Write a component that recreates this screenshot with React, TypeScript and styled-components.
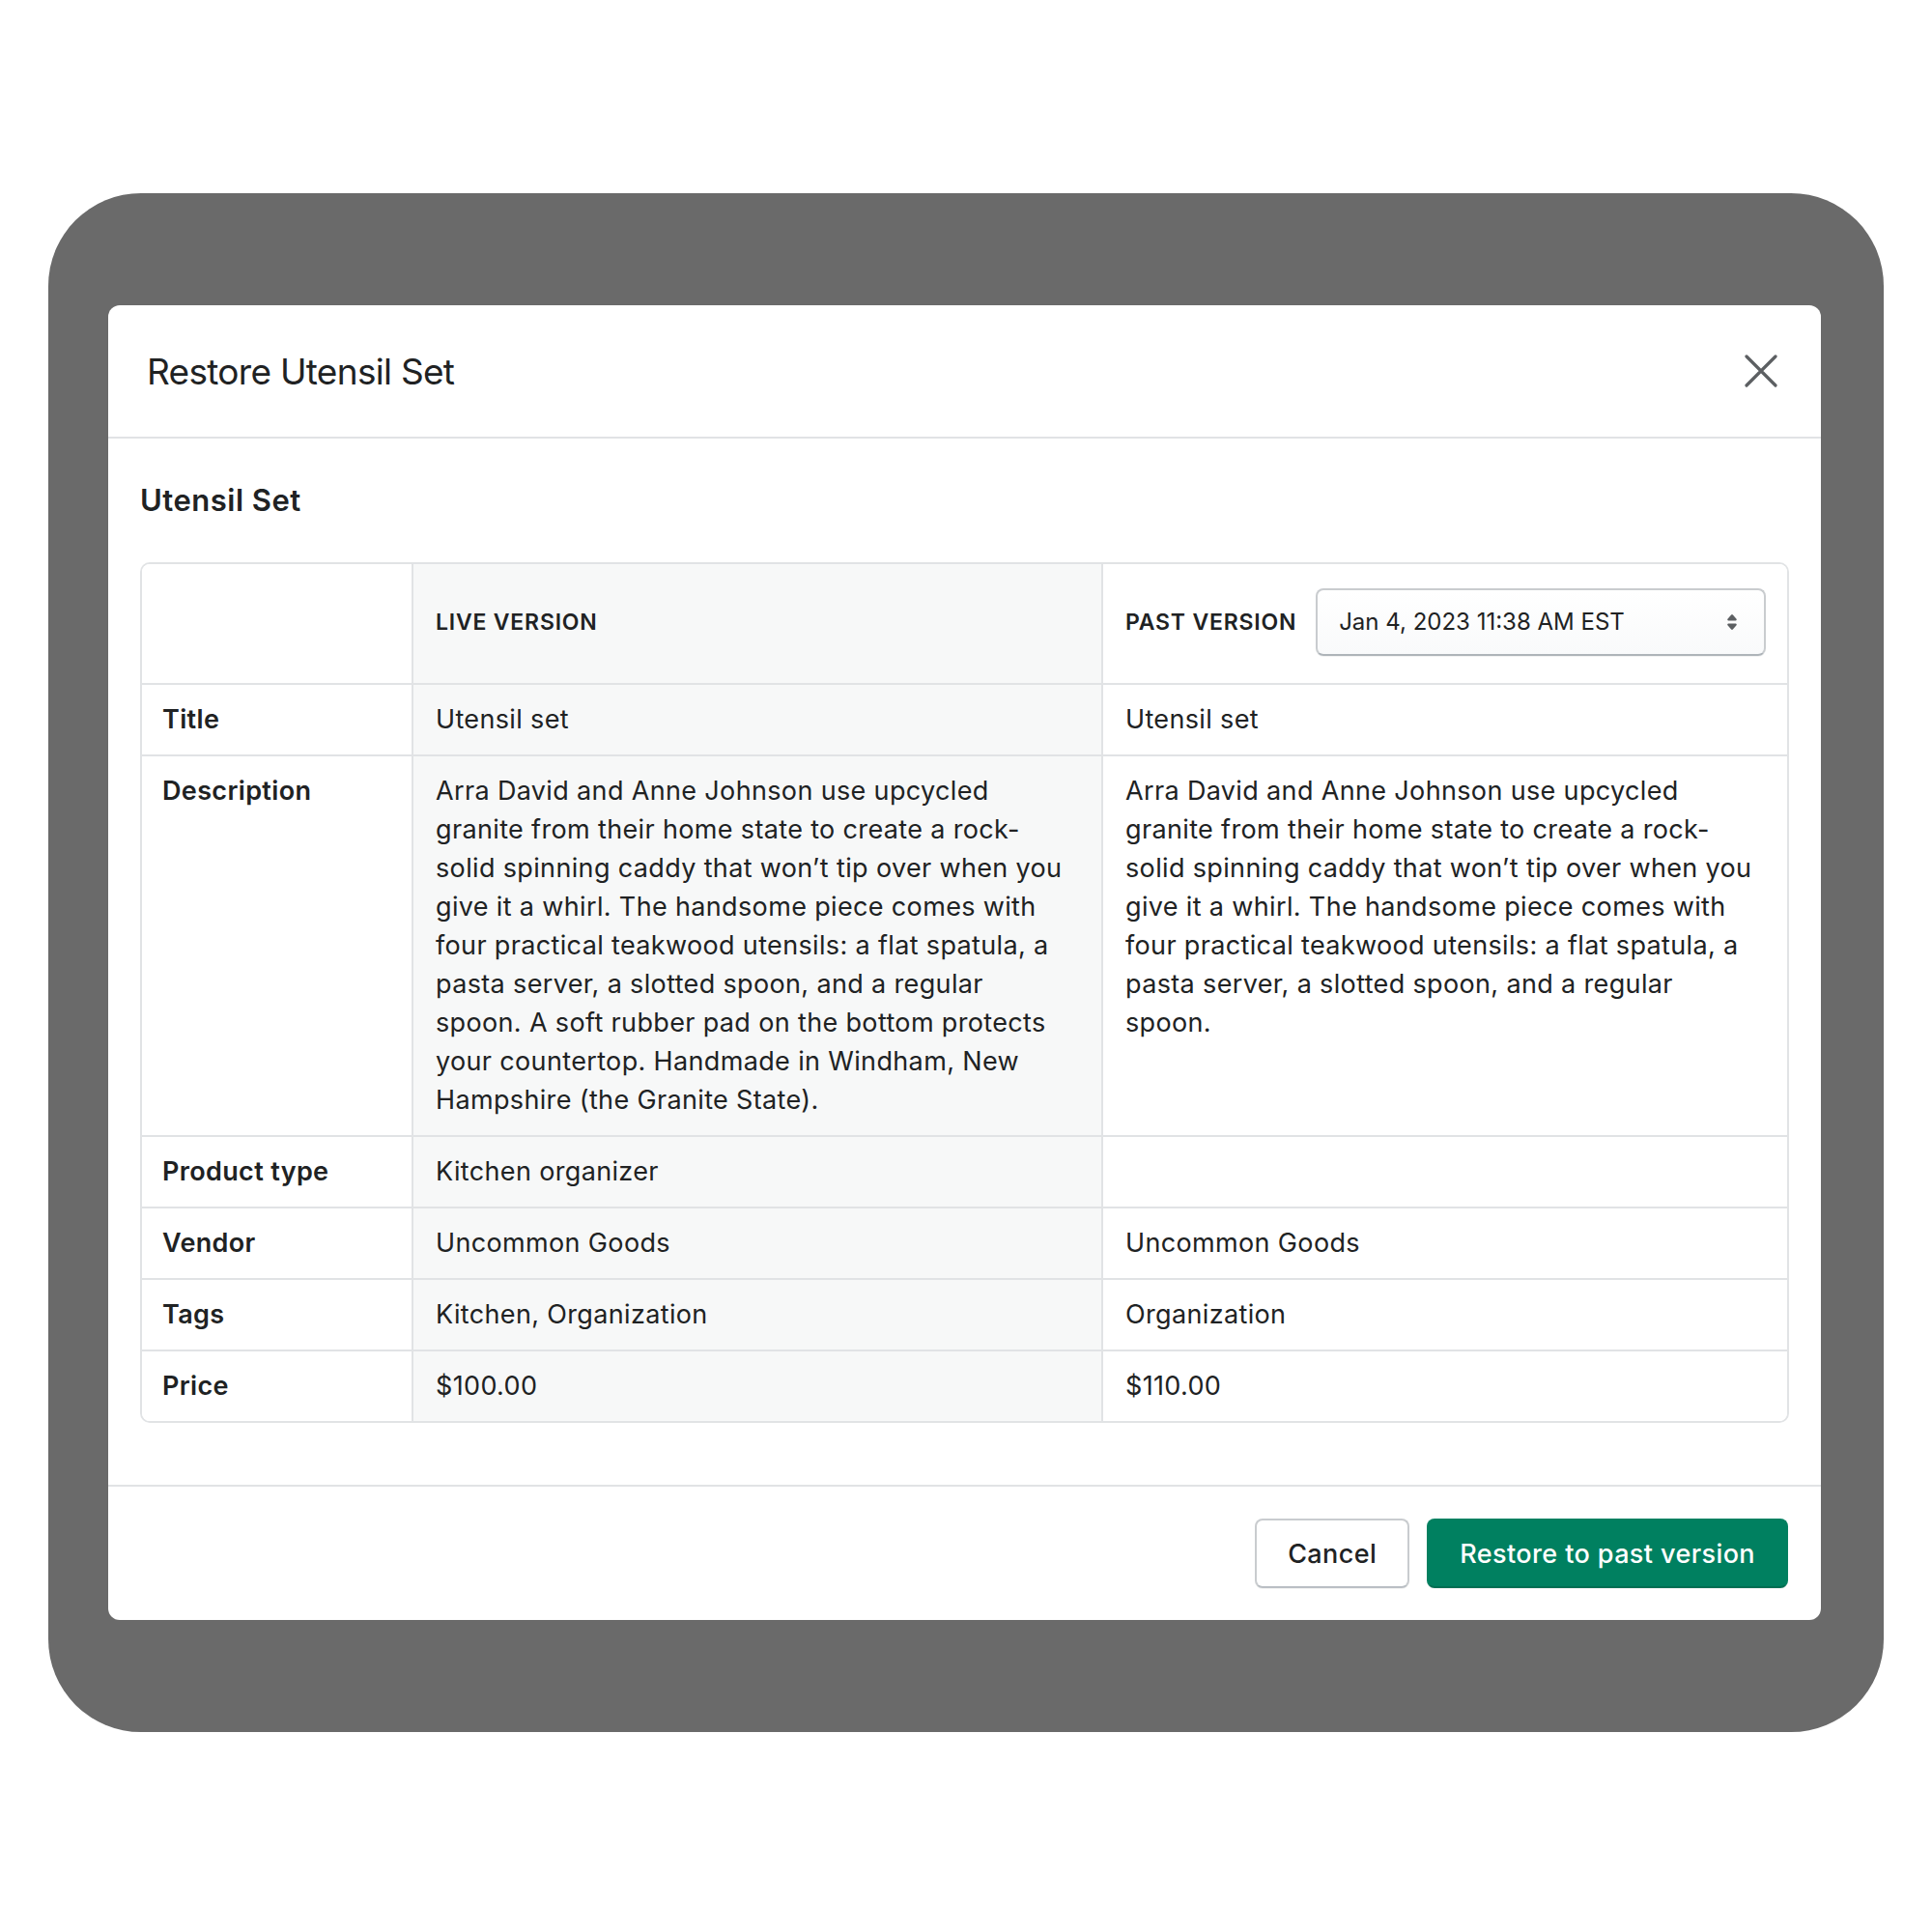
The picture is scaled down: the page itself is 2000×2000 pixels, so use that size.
import React from "react";
import styled, { createGlobalStyle } from "styled-components";

const GlobalStyle = createGlobalStyle`
  body {
    margin: 0;
    background: #ffffff;
    font-family: Inter, "Noto Sans", "Liberation Sans", sans-serif;
    color: #202223;
  }
  * {
    box-sizing: border-box;
  }
`;

const Page = styled.div`
  width: 2000px;
  height: 2000px;
  padding: 200px 50px 0;
`;

const Frame = styled.div`
  height: 1593px;
  background: #6a6a6a;
  border-radius: 96px;
  padding: 116px 65px 116px 62px;
`;

const Modal = styled.div`
  height: 100%;
  background: #ffffff;
  border-radius: 12px;
  display: flex;
  flex-direction: column;
  overflow: hidden;
`;

const Header = styled.div`
  height: 138px;
  flex: none;
  display: flex;
  align-items: center;
  justify-content: space-between;
  padding: 0 44px 0 40px;
  border-bottom: 2px solid #e1e3e5;
`;

const Title = styled.h2`
  margin: 0;
  font-size: 37px;
  font-weight: 400;
  letter-spacing: -0.7px;
  color: #202223;
`;

const CloseButton = styled.button`
  width: 36px;
  height: 36px;
  padding: 0;
  border: none;
  background: none;
  display: flex;
  align-items: center;
  justify-content: center;
  color: #5c5f62;
`;

const Body = styled.div`
  padding: 44px 33px 64px;
  flex: none;
`;

const ProductName = styled.h3`
  margin: 0 0 44px;
  font-size: 31px;
  line-height: 40px;
  font-weight: 600;
  letter-spacing: 0.5px;
`;

const Table = styled.div`
  border: 2px solid #e1e3e5;
  border-radius: 10px;
  overflow: hidden;
`;

const Row = styled.div<{ $head?: boolean }>`
  display: grid;
  grid-template-columns: 279px 714px 1fr;
  min-height: ${(p) => (p.$head ? "125px" : "auto")};
  border-bottom: 2px solid #e1e3e5;
  &:last-child {
    border-bottom: none;
  }
`;

const Cell = styled.div<{ $shade?: boolean; $first?: boolean; $head?: boolean }>`
  padding: 16px 27px 16px ${(p) => (p.$first ? "21px" : "23px")};
  border-left: ${(p) => (p.$first ? "none" : "2px solid #e1e3e5")};
  background: ${(p) => (p.$shade ? "#f7f8f8" : "#ffffff")};
  font-size: 27px;
  line-height: 40px;
  font-weight: ${(p) => (p.$first ? 600 : 400)};
  letter-spacing: 0.35px;
  ${(p) =>
    p.$head &&
    `
    display: flex;
    align-items: center;
    padding-right: 22px;
    padding-bottom: 20px;
  `}
`;

const ColumnLabel = styled.span`
  font-size: 23px;
  font-weight: 600;
  letter-spacing: 0.8px;
  text-transform: uppercase;
  white-space: nowrap;
`;

const PastHead = styled.div`
  display: flex;
  align-items: center;
  gap: 20px;
  width: 100%;
`;

const Select = styled.div`
  flex: 1;
  height: 70px;
  display: flex;
  align-items: center;
  justify-content: space-between;
  padding: 0 17px 0 22px;
  border: 2px solid #c9cccf;
  border-bottom-color: #aeb4b9;
  border-radius: 8px;
  background: linear-gradient(#ffffff, #f9fafb);
  box-shadow: 0 1px 0 rgba(0, 0, 0, 0.05);
  font-size: 24px;
  color: #202223;
  letter-spacing: 0;
`;

const Footer = styled.div`
  flex: 1;
  display: flex;
  align-items: center;
  justify-content: flex-end;
  gap: 18px;
  padding: 0 34px;
  border-top: 2px solid #e1e3e5;
`;

const Button = styled.button<{ $primary?: boolean }>`
  height: 72px;
  padding: 0 32px;
  border-radius: 8px;
  font-family: inherit;
  font-size: 27px;
  font-weight: 500;
  letter-spacing: 0.4px;
  color: ${(p) => (p.$primary ? "#ffffff" : "#202223")};
  background: ${(p) => (p.$primary ? "#008060" : "#ffffff")};
  border: 2px solid ${(p) => (p.$primary ? "#008060" : "#c9cccf")};
  border-bottom-color: ${(p) => (p.$primary ? "#006e52" : "#babfc4")};
  box-shadow: 0 1px 0 rgba(0, 0, 0, 0.05);
`;

const description =
  "Arra David and Anne Johnson use upcycled granite from their home state to create a rock-solid spinning caddy that won\u2019t tip over when you give it a whirl. The handsome piece comes with four practical teakwood utensils: a flat spatula, a pasta server, a slotted spoon, and a regular spoon.";

const rows = [
  { label: "Title", live: "Utensil set", past: "Utensil set" },
  {
    label: "Description",
    live:
      description +
      " A soft rubber pad on the bottom protects your countertop. Handmade in Windham, New Hampshire (the Granite State).",
    past: description,
  },
  { label: "Product type", live: "Kitchen organizer", past: "" },
  { label: "Vendor", live: "Uncommon Goods", past: "Uncommon Goods" },
  { label: "Tags", live: "Kitchen, Organization", past: "Organization" },
  { label: "Price", live: "$100.00", past: "$110.00" },
];

function CloseIcon() {
  return (
    <svg width="34" height="34" viewBox="0 0 34 34" fill="none">
      <path
        d="M2 2L32 32M32 2L2 32"
        stroke="currentColor"
        strokeWidth="3.2"
        strokeLinecap="round"
      />
    </svg>
  );
}

function SelectIcon() {
  return (
    <svg width="32" height="32" viewBox="0 0 20 20" fill="#5c5f62">
      <path d="M7.676 9h4.648c.563 0 .879-.603.53-1.014l-2.323-2.746a.708.708 0 0 0-1.062 0l-2.324 2.746c-.347.411-.032 1.014.531 1.014Zm4.648 2h-4.648c-.563 0-.878.603-.53 1.014l2.323 2.746c.27.32.792.32 1.062 0l2.323-2.746c.349-.411.033-1.014-.53-1.014Z" />
    </svg>
  );
}

export default function App() {
  return (
    <Page>
      <GlobalStyle />
      <Frame>
        <Modal>
          <Header>
            <Title>Restore Utensil Set</Title>
            <CloseButton aria-label="Close">
              <CloseIcon />
            </CloseButton>
          </Header>
          <Body>
            <ProductName>Utensil Set</ProductName>
            <Table>
              <Row $head>
                <Cell $first $head />
                <Cell $shade $head>
                  <ColumnLabel>Live version</ColumnLabel>
                </Cell>
                <Cell $head>
                  <PastHead>
                    <ColumnLabel>Past version</ColumnLabel>
                    <Select>
                      <span>Jan 4, 2023 11:38 AM EST</span>
                      <SelectIcon />
                    </Select>
                  </PastHead>
                </Cell>
              </Row>
              {rows.map((row) => (
                <Row key={row.label}>
                  <Cell $first>{row.label}</Cell>
                  <Cell $shade>{row.live}</Cell>
                  <Cell>{row.past}</Cell>
                </Row>
              ))}
            </Table>
          </Body>
          <Footer>
            <Button>Cancel</Button>
            <Button $primary>Restore to past version</Button>
          </Footer>
        </Modal>
      </Frame>
    </Page>
  );
}
